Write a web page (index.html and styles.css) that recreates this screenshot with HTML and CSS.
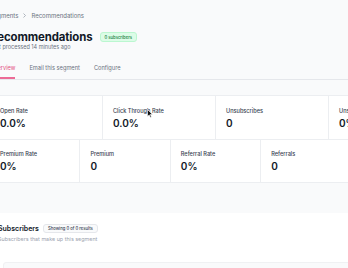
FILE: index.html
```html
<!DOCTYPE html>
<html>
  <head>
    <title>Recommendations</title>
    <link rel="stylesheet" href="styles.css">
  </head>
  <body>
    <div class="page">
      <header class="segment-header">
        <nav class="breadcrumb">
          <span>Segments</span>
          <svg class="crumb-sep" width="3" height="5" viewBox="0 0 3 5"><path d="M0.5 0.5 L2.5 2.5 L0.5 4.5" fill="none" stroke="#9ca3af" stroke-width="0.8"/></svg>
          <span>Recommendations</span>
        </nav>
        <div class="title-row">
          <h1>Recommendations</h1>
          <span class="badge badge-green">0 subscribers</span>
        </div>
        <p class="processed">Last processed 14 minutes ago</p>
        <div class="tabs">
          <a class="tab active">Overview</a>
          <a class="tab">Email this segment</a>
          <a class="tab">Configure</a>
        </div>
      </header>

      <section class="stats">
        <div class="stats-card">
          <div class="stats-row four">
            <div class="stat"><div class="stat-label">Open Rate</div><div class="stat-value">0.0%</div></div>
            <div class="stat"><div class="stat-label">Click Through Rate</div><div class="stat-value">0.0%</div></div>
            <div class="stat"><div class="stat-label">Unsubscribes</div><div class="stat-value">0</div></div>
            <div class="stat"><div class="stat-label">Unsubscribe Rate</div><div class="stat-value">0%</div></div>
          </div>
          <div class="stats-row five">
            <div class="stat"><div class="stat-label">Premium Rate</div><div class="stat-value">0%</div></div>
            <div class="stat"><div class="stat-label">Premium</div><div class="stat-value">0</div></div>
            <div class="stat"><div class="stat-label">Referral Rate</div><div class="stat-value">0%</div></div>
            <div class="stat"><div class="stat-label">Referrals</div><div class="stat-value">0</div></div>
            <div class="stat"><div class="stat-label">Upgrades</div><div class="stat-value">0</div></div>
          </div>
        </div>
      </section>

      <section class="subscribers">
        <div class="subscribers-head">
          <h2>Subscribers</h2>
          <span class="badge badge-gray">Showing 0 of 0 results</span>
        </div>
        <p class="subscribers-sub">Subscribers that make up this segment</p>
        <div class="subscribers-table"></div>
      </section>
    </div>

    <!-- mouse pointer from the screenshot -->
    <svg class="cursor" width="6" height="9" viewBox="0 0 6 9"><path d="M0.5 0.5 L0.5 7.5 L2.2 5.9 L3.4 8.5 L4.4 8 L3.3 5.5 L5.5 5.5 Z" fill="#111" stroke="#fff" stroke-width="0.6"/></svg>
  </body>
</html>
```

FILE: styles.css
```css
body {
  margin: 0;
  background-color: #ffffff;
  color: #111827;
  font-family: Inter, "Noto Sans", Arial, sans-serif;
  overflow: hidden;
}

.page {
  margin-left: -10px;
  width: 470px;
}

/* header with breadcrumb, title and tabs */
.segment-header {
  background-color: #f9fafb;
  padding-top: 10px;
}

.breadcrumb {
  display: flex;
  align-items: center;
  gap: 5px;
  height: 10px;
  font-size: 6px;
  color: #6b7280;
}

.title-row {
  display: flex;
  align-items: center;
  gap: 7px;
  margin-top: 11px;
}

h1 {
  margin: 0;
  font-size: 11.4px;
  line-height: 12px;
  font-weight: 700;
  letter-spacing: -0.1px;
  color: #111827;
}

.badge {
  display: inline-flex;
  align-items: center;
  height: 10px;
  padding: 0 4px;
  border-radius: 3px;
  font-size: 4.2px;
  font-weight: 500;
  box-sizing: border-box;
}

.badge-green {
  background-color: #dcfce7;
  color: #15803d;
  border: 1px solid #bbf7d0;
}

.badge-gray {
  background-color: #f9fafb;
  color: #374151;
  border: 1px solid #e5e7eb;
  height: 9px;
}

.processed {
  margin: 0;
  font-size: 5.5px;
  line-height: 8px;
  color: #6b7280;
}

.tabs {
  display: flex;
  gap: 14px;
  margin-top: 13px;
  border-bottom: 1px solid #e5e7eb;
}

.tab {
  font-size: 5.7px;
  line-height: 8px;
  font-weight: 400;
  color: #6b7280;
  padding-bottom: 5px;
  border-bottom: 2px solid transparent;
}

.tab.active {
  color: #e4507f;
  border-bottom-color: #ec6b96;
}

/* stats grid */
.stats {
  background-color: #f9fafb;
  padding: 15px 0 30px 0;
}

.stats-card {
  width: 452px;
  background-color: #ffffff;
  border-top: 1px solid #eceef1;
  border-bottom: 1px solid #eceef1;
}

.stats-row {
  display: grid;
}

.stats-row.four {
  grid-template-columns: repeat(4, 1fr);
  border-bottom: 1px solid #eceef1;
}

.stats-row.five {
  grid-template-columns: repeat(5, 1fr);
}

.stat {
  padding: 11px 10px 10px 10px;
  border-right: 1px solid #eceef1;
}

.stat-label {
  font-size: 5.6px;
  line-height: 8px;
  font-weight: 500;
  color: #374151;
}

.stat-value {
  margin-top: 2px;
  font-size: 10px;
  line-height: 12px;
  font-weight: 600;
  color: #111827;
}

.stats-row.five .stat {
  padding-top: 10px;
}

/* subscribers list */
.subscribers {
  background-color: #ffffff;
  padding: 9px 0 0 8px;
}

.subscribers-head {
  display: flex;
  align-items: center;
  gap: 4px;
  height: 12px;
}

h2 {
  margin: 0;
  font-size: 7px;
  font-weight: 600;
  color: #111827;
}

.subscribers-sub {
  margin: 1px 0 0 0;
  font-size: 5.4px;
  line-height: 8px;
  color: #9ca3af;
}

.subscribers-table {
  margin: 19px 0 0 5px;
  height: 40px;
  background-color: #f9fafb;
  border: 1px solid #f0f1f3;
  border-radius: 3px;
}

.cursor {
  position: absolute;
  left: 147px;
  top: 109px;
}
```
